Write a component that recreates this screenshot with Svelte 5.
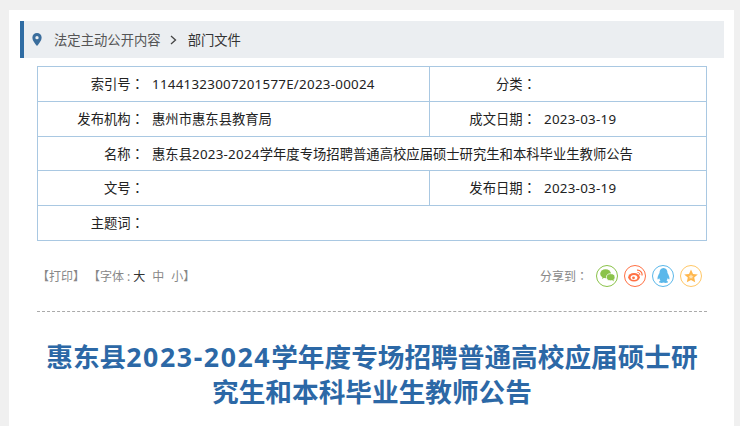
<script>
	const title = '惠东县2023-2024学年度专场招聘普通高校应届硕士研究生和本科毕业生教师公告';

	const rows = [
		[{ label: '索引号', value: '11441323007201577E/2023-00024' }, { label: '分类', value: '' }],
		[{ label: '发布机构', value: '惠州市惠东县教育局' }, { label: '成文日期', value: '2023-03-19' }],
		[{ label: '名称', value: title, wide: true }],
		[{ label: '文号', value: '' }, { label: '发布日期', value: '2023-03-19' }],
		[{ label: '主题词', value: '', wide: true }]
	];

	// odd entries are the latin runs, they get their own spacing
	function parts(text) {
		return text.split(/([\x00-\x7f]+)/);
	}
</script>

<div class="page">
	<div class="panel">
		<div class="crumbs">
			<svg class="pin" width="10" height="13" viewBox="0 0 10 14">
				<path fill="#3a6d9c" fill-rule="evenodd" d="M5 0a5 5 0 0 1 5 5c0 3-3 6.500-5 9-2-2.500-5-6-5-9a5 5 0 0 1 5-5zm0 3.200a1.800 1.800 0 1 0 0 3.600 1.800 1.800 0 0 0 0-3.600z" />
			</svg>
			<span class="crumb">法定主动公开内容</span>
			<svg class="sep" width="7" height="10" viewBox="0 0 7 10">
				<path fill="none" stroke="#444" stroke-width="1.300" d="M1 1l4.500 4L1 9" />
			</svg>
			<span class="crumb current">部门文件</span>
		</div>

		<div class="meta">
			{#each rows as row}
				<div class="row">
					{#each row as cell}
						<div class="cell" class:wide={cell.wide}>
							<span class="label">{cell.label}<span class="colon">：</span></span>
							<span class="value">
								{#each parts(cell.value) as part, i}{#if i % 2}<span class="num">{part}</span>{:else}{part}{/if}{/each}
							</span>
						</div>
					{/each}
				</div>
			{/each}
		</div>

		<div class="tools">
			<div class="print">
				<span>【打印】</span>
				<span>【字体<span class="sm-colon">:</span><b>大</b><i>中</i><i>小</i>】</span>
			</div>
			<div class="share">
				<span class="share-label">分享到<span class="colon">：</span></span>
				<span class="icon wechat">
					<svg width="15" height="13" viewBox="0 0 14 12">
						<ellipse cx="5.200" cy="4.300" rx="5" ry="4.200" fill="#8bc34a" />
						<path d="M2.500 7l-.6 2.200 2.400-1.300z" fill="#8bc34a" />
						<ellipse cx="10" cy="7.600" rx="4" ry="3.300" fill="#8bc34a" stroke="#fff" stroke-width=".7" />
						<path d="M11.500 10.300l1.300 1.300-.2-2z" fill="#8bc34a" />
					</svg>
				</span>
				<span class="icon weibo">
					<svg width="15" height="13" viewBox="0 0 15 13">
						<ellipse cx="6" cy="8.300" rx="5.800" ry="4.200" fill="#ff7043" />
						<ellipse cx="6" cy="8.600" rx="3.400" ry="2.500" fill="#fff" />
						<circle cx="5.500" cy="8.800" r="1.400" fill="#ff7043" />
						<path d="M9 1.200a4.500 4.500 0 0 1 5 5.300" fill="none" stroke="#ff7043" stroke-width="1.200" />
						<path d="M9.500 3.500a2 2 0 0 1 2.300 2.400" fill="none" stroke="#ff7043" stroke-width="1" />
					</svg>
				</span>
				<span class="icon qq">
					<svg width="13" height="15" viewBox="0 0 13 15">
						<path fill="#5bb8ea" d="M6.500 0C9.300 0 10.500 2.200 10.500 5c1.200 2 2.300 4.300 1.900 6.300-.6.500-1.300-.6-1.600-1.200-.2 1-.7 1.900-1.300 2.500.9.400 1.600 1 1.400 1.700-.3.800-3.500.8-4.400.2-.9.600-4.100.6-4.400-.2-.2-.7.500-1.300 1.400-1.700-.6-.6-1.100-1.500-1.300-2.500-.3.600-1 1.700-1.600 1.200C.2 9.300 1.300 7 2.500 5 2.500 2.200 3.700 0 6.500 0z" />
					</svg>
				</span>
				<span class="icon star">
					<svg width="14" height="14" viewBox="0 0 14 14">
						<path fill="#ffb74d" d="M7 .5l2 4.400 4.800.5-3.600 3.200 1 4.700L7 10.900l-4.200 2.400 1-4.700L.2 5.400 5 4.900z" />
						<path fill="#ffe3b5" d="M7 5.200l.8 1.500 1.700.2-1.200 1.100.3 1.600L7 9.200l-1.600.4.300-1.600-1.200-1.100 1.700-.2z" />
					</svg>
				</span>
			</div>
		</div>

		<h1>{#each parts(title) as part, i}{#if i % 2}<span class="num">{part}</span>{:else}{part}{/if}{/each}</h1>
	</div>
</div>

<style>
	:global(body) {
		background: #f0f0f0;
		font-family: "Noto Sans", "Noto Sans CJK SC", sans-serif;
	}

	.page {
		height: 426px;
		overflow: hidden;
		box-sizing: border-box;
		padding: 10px 6px 0 9px;
	}

	.panel {
		background: #fff;
		height: 416px;
		padding: 11px 10px 0 11px;
		box-sizing: border-box;
		overflow: hidden;
	}

	.crumbs {
		height: 37px;
		background: #ebeef1;
		border-left: 4px solid #2f6ca3;
		display: flex;
		align-items: center;
		padding-left: 8px;
		font-size: 13.330px;
		color: #555;
	}

	.pin {
		margin-right: 12px;
	}

	.sep {
		margin: 0 11px 0 9px;
	}

	.current {
		color: #333;
	}

	.meta {
		margin: 8px 17px 0;
		width: 670px;
		box-sizing: border-box;
		border: 1px solid #a9c8e2;
		border-bottom: 0;
		font-size: 13.330px;
		color: #222;
	}

	.colon {
		font-family: "Noto Sans CJK TC", sans-serif;
	}

	.num {
		letter-spacing: .27px;
	}

	.row {
		display: flex;
		height: 34.800px;
		line-height: 34.400px;
		border-bottom: 1px solid #a9c8e2;
		box-sizing: border-box;
	}

	.cell {
		width: 391px;
		display: flex;
		align-items: baseline;
	}

	.cell + .cell {
		flex: 1;
		width: auto;
		border-left: 1px solid #a9c8e2;
	}

	.cell.wide {
		width: 100%;
	}

	.label {
		width: 106px;
		text-align: right;
		flex: none;
		margin-right: 8px;
	}

	.tools {
		margin: 24px 17px 0;
		width: 670px;
		height: 47px;
		box-sizing: border-box;
		padding: 0 5px 0 0;
		border-bottom: 1px dashed #aaa;
		display: flex;
		justify-content: space-between;
		align-items: flex-start;
		font-size: 12px;
		color: #888;
	}

	.print {
		display: flex;
		gap: 3px;
		height: 22px;
		align-items: center;
	}

	.print b {
		font-weight: 400;
		color: #333;
		margin-right: 7px;
	}

	.print i {
		font-style: normal;
		margin-right: 7px;
	}

	.print i:last-child {
		margin-right: 0;
	}

	.sm-colon {
		margin: 0 3px;
	}

	.share {
		display: flex;
		align-items: center;
		gap: 6px;
		height: 22px;
	}

	.share-label {
		margin-right: 2px;
	}

	.icon {
		width: 22px;
		height: 22px;
		box-sizing: border-box;
		border: 1px solid;
		border-radius: 50%;
		display: flex;
		align-items: center;
		justify-content: center;
	}

	.wechat { border-color: #8bc34a; }
	.weibo { border-color: #ff7043; }
	.qq { border-color: #5bb8ea; }
	.star { border-color: #ffc766; }

	h1 {
		margin: 27px 0 0;
		text-align: center;
		font-size: 26.670px;
		line-height: 35px;
		font-weight: 700;
		color: #2c68a6;
		padding: 0 17px;
	}

	h1 .num {
		letter-spacing: 1.600px;
	}
</style>
